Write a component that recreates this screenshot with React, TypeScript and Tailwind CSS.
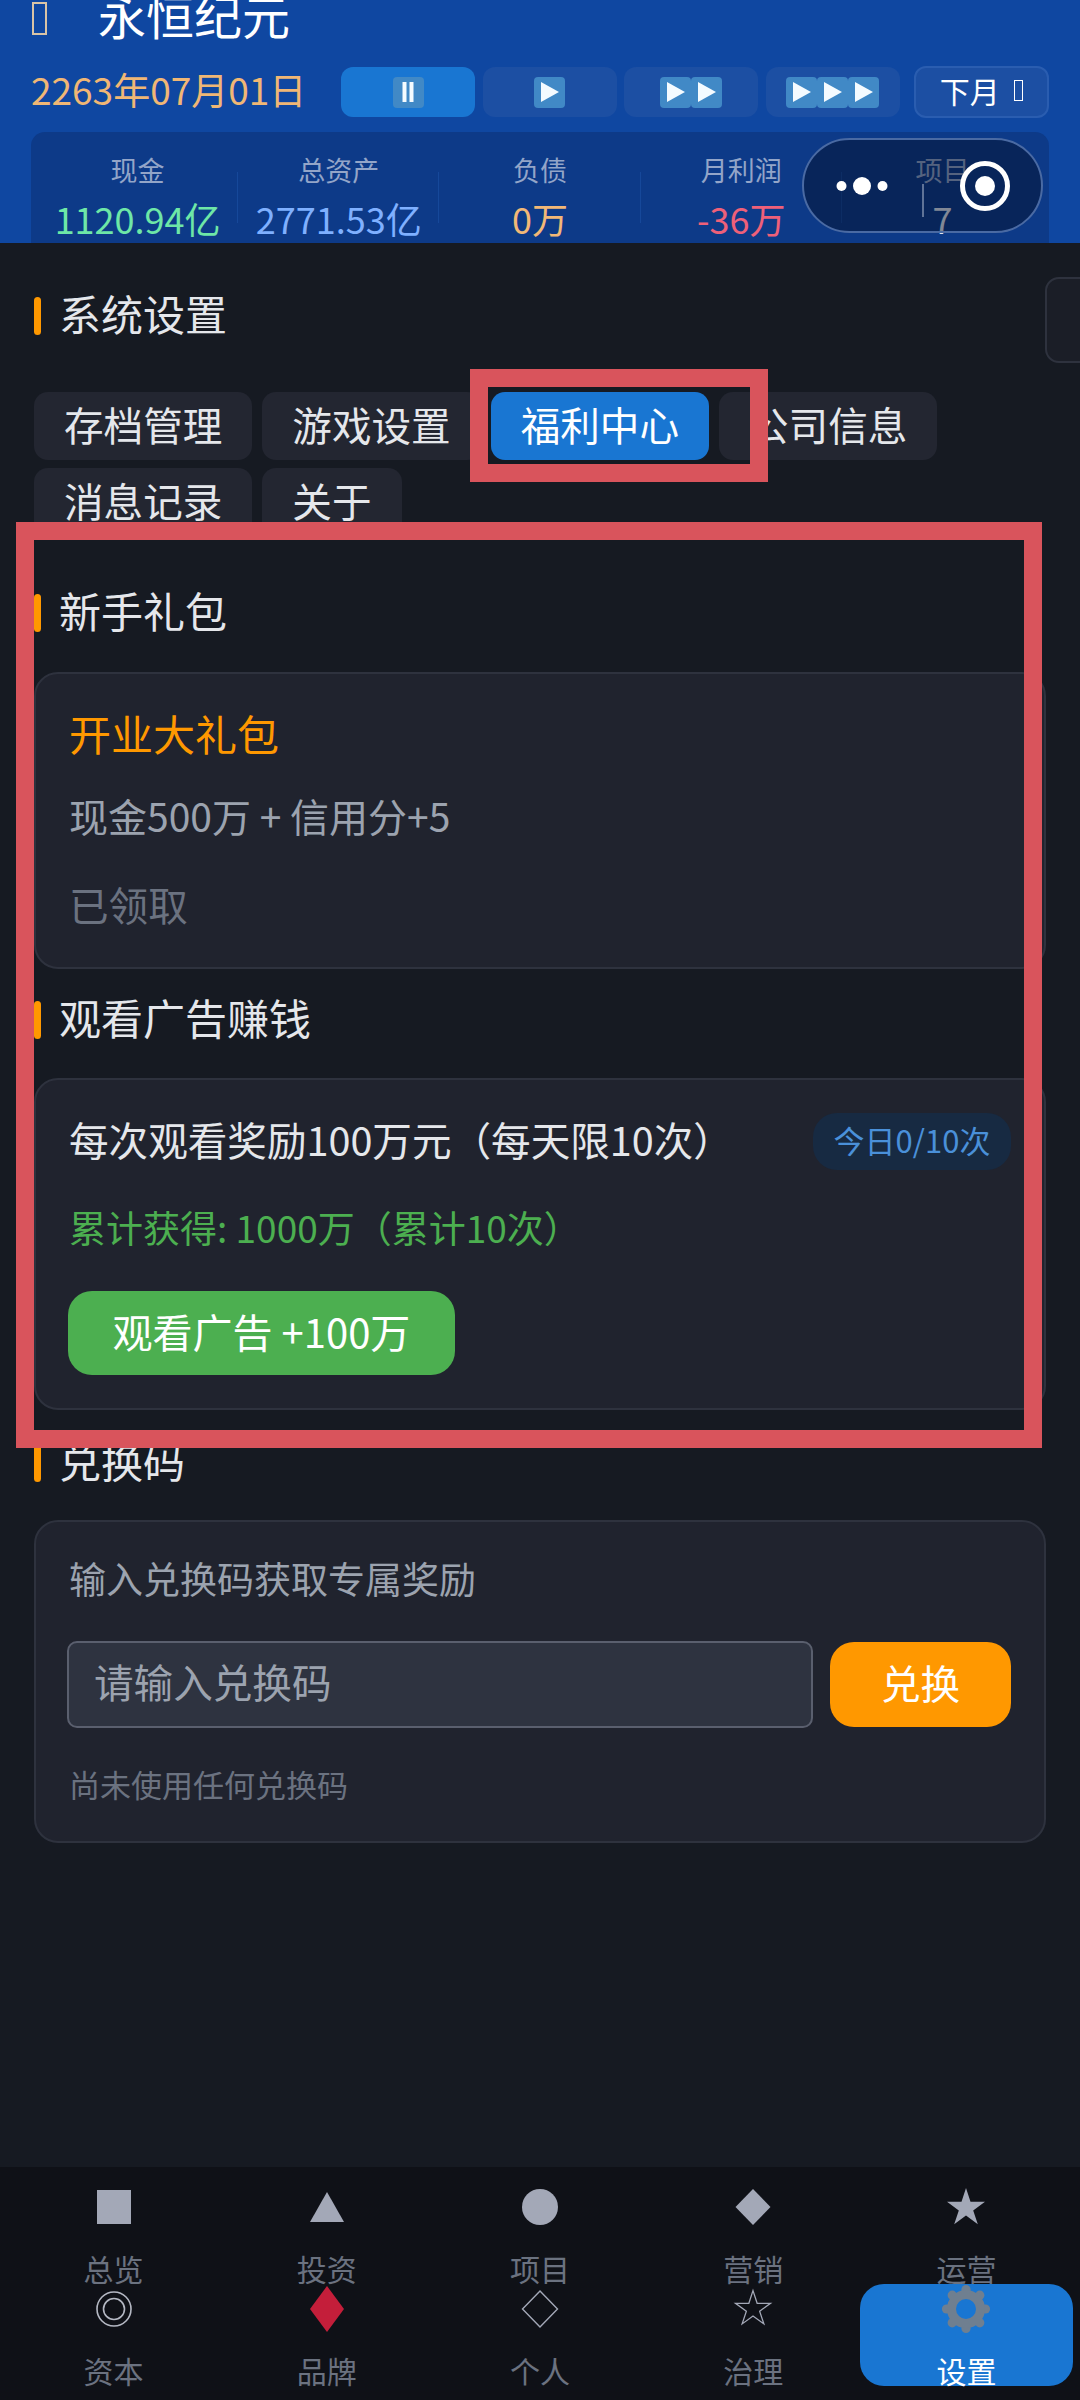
import React from "react";

const FONT = '"Noto Sans CJK SC", "Noto Sans", sans-serif';

function Square({ children }: { children: React.ReactNode }) {
  return (
    <span className="flex h-[31px] w-[31px] items-center justify-center rounded-[4px] bg-[#4189c6]">
      {children}
    </span>
  );
}

const Play = () => (
  <Square>
    <svg width="20" height="22" viewBox="0 0 20 22">
      <polygon points="1,1 19,11 1,21" fill="#f4fbff" />
    </svg>
  </Square>
);

function Speed({ active, children }: { active?: boolean; children: React.ReactNode }) {
  return (
    <div
      className={
        "flex h-[50px] w-[134px] items-center justify-center rounded-[12px] " +
        (active ? "bg-[#1976d2]" : "bg-[#1c4fa3]")
      }
    >
      {children}
    </div>
  );
}

function Stat({ label, value, color, divider }: { label: string; value: string; color: string; divider?: boolean }) {
  return (
    <div className="relative flex flex-col items-center">
      <div className="h-[38px] text-[27px] leading-[38px] text-[#93a5c8]">{label}</div>
      <div className={"mt-[5px] h-[48px] text-[36px] leading-[48px] " + color}>{value}</div>
      {divider && <div className="absolute right-0 top-[21px] h-[51px] w-[1px] bg-[#16489a]" />}
    </div>
  );
}

function Heading({ children, className }: { children: React.ReactNode; className?: string }) {
  return (
    <div className={"flex h-[38px] items-center " + (className ?? "")}>
      <div className="h-full w-[7px] rounded-full bg-[#ff9800]" />
      <div className="ml-[18px] pb-[6px] text-[42px] leading-[38px] text-[#e5e7eb]">{children}</div>
    </div>
  );
}

function Tab({ children, active }: { children: React.ReactNode; active?: boolean }) {
  return (
    <div
      className={
        "flex h-[68px] items-center rounded-[14px] px-[30px] pb-[5px] text-[39.6px] " +
        (active ? "bg-[#1976d2] text-white" : "bg-[#232631] text-[#e5e7eb]")
      }
    >
      {children}
    </div>
  );
}

function Card({ children, className }: { children: React.ReactNode; className?: string }) {
  return (
    <div className={"rounded-[24px] border-2 border-[#2e323e] bg-[#20232e] px-[33px] " + (className ?? "")}>
      {children}
    </div>
  );
}

const FILL = "#a3a8b7";
const STAR = "25,6 29.5,19.8 44,19.8 32.2,28.4 36.8,42.2 25,33.6 13.2,42.2 17.8,28.4 6,19.8 20.5,19.8";

function Glyph({ children }: { children: React.ReactNode }) {
  return (
    <svg width="50" height="50" viewBox="0 0 50 50" className="shrink-0">
      {children}
    </svg>
  );
}

const gearAngles = [0, 45, 90, 135, 180, 225, 270, 315];

const navItems: { label: string; icon: React.ReactNode; active?: boolean }[] = [
  { label: "总览", icon: <rect x="8" y="8" width="34" height="34" fill={FILL} /> },
  { label: "投资", icon: <polygon points="25,10 8,40 42,40" fill={FILL} /> },
  { label: "项目", icon: <circle cx="25" cy="25" r="18" fill={FILL} /> },
  { label: "营销", icon: <polygon points="25,7 42.5,25 25,43 7.5,25" fill={FILL} /> },
  { label: "运营", icon: <polygon points={STAR} fill={FILL} /> },
  {
    label: "资本",
    icon: (
      <g fill="none" stroke="#b4b8c3" strokeWidth="1.6">
        <circle cx="25" cy="25" r="17" />
        <circle cx="25" cy="25" r="10.5" />
      </g>
    ),
  },
  { label: "品牌", icon: <polygon points="25,2 42,25 25,48 8,25" fill="#c41e3a" /> },
  { label: "个人", icon: <polygon points="25,7 42.5,25 25,43 7.5,25" fill="none" stroke={FILL} strokeWidth="1.4" /> },
  {
    label: "治理",
    icon: (
      <polygon
        points={STAR}
        fill="none"
        stroke={FILL}
        strokeWidth="1.4"
        transform="translate(25 25) scale(0.92) translate(-25 -26)"
      />
    ),
  },
  {
    label: "设置",
    active: true,
    icon: (
      <g>
        {gearAngles.map((a) => (
          <circle key={a} cx="25" cy="5.5" r="4.6" fill="#6f7f90" transform={`rotate(${a} 25 25)`} />
        ))}
        <circle cx="25" cy="25" r="14.5" fill="none" stroke="#6f7f90" strokeWidth="9" />
      </g>
    ),
  },
];

export default function App() {
  return (
    <div
      className="relative flex h-[2400px] w-[1080px] flex-col overflow-hidden bg-[#161a22]"
      style={{ fontFamily: FONT }}
    >
      <header className="h-[243px] shrink-0 overflow-hidden bg-[#0f47a1] px-[31px]">
        <div className="-mt-[10px] flex h-[48px] items-center">
          <div className="ml-[1px] mt-[9px] h-[33px] w-[15px] border-2 border-[#d9c4a6]" />
          <div className="ml-[51px] text-[48px] leading-[48px] text-white">永恒纪元</div>
        </div>

        <div className="mt-[28px] flex h-[52px] items-center">
          <div className="w-[310px] shrink-0 whitespace-nowrap pb-[5px] text-[37px] text-[#f0b775]">2263年07月01日</div>
          <div className="flex gap-[7.5px]">
            <Speed active>
              <Square>
                <svg width="16" height="22" viewBox="0 0 16 22">
                  <rect x="2.5" y="1" width="4" height="20" fill="#f4fbff" />
                  <rect x="9.5" y="1" width="4" height="20" fill="#f4fbff" />
                </svg>
              </Square>
            </Speed>
            <Speed>
              <Play />
            </Speed>
            <Speed>
              <Play />
              <Play />
            </Speed>
            <Speed>
              <Play />
              <Play />
              <Play />
            </Speed>
          </div>
          <div className="ml-[14px] flex h-[52px] w-[136px] items-center justify-center rounded-[12px] border-2 border-[#2a5db0] bg-[#1c4fa3] pb-[4px] text-[30px] text-white">
            下月
            <span className="ml-[14px] h-[21px] w-[9px] border border-white" />
          </div>
        </div>

        <div className="mt-[14px] grid h-[130px] grid-cols-5 rounded-[14px] bg-[#0d3a88] px-[6px] pt-[19px]">
          <Stat label="现金" value="1120.94亿" color="text-[#6ee7a7]" divider />
          <Stat label="总资产" value="2771.53亿" color="text-[#7fb0ff]" divider />
          <Stat label="负债" value="0万" color="text-[#f2b877]" divider />
          <Stat label="月利润" value="-36万" color="text-[#ee6079]" divider />
          <Stat label="项目" value="7" color="text-[#dfe5f0]" />
        </div>
      </header>

      <main className="flex-1 overflow-hidden px-[34px] pt-[54px]">
        <Heading>系统设置</Heading>

        <div className="mt-[57px] flex flex-wrap gap-x-[10px] gap-y-[8px]">
          <Tab>存档管理</Tab>
          <Tab>游戏设置</Tab>
          <Tab active>福利中心</Tab>
          <Tab>公司信息</Tab>
          <Tab>消息记录</Tab>
          <Tab>关于</Tab>
        </div>

        <Heading className="mt-[58px]">新手礼包</Heading>
        <Card className="mt-[40px] pb-[37px] pt-[32px]">
          <div className="text-[42px] leading-[54px] text-[#ff9800]">开业大礼包</div>
          <div className="mt-[31px] text-[39px] leading-[48px] text-[#9ca3af]">现金500万 + 信用分+5</div>
          <div className="mt-[39px] text-[39.6px] leading-[52px] text-[#6b7280]">已领取</div>
        </Card>

        <Heading className="mt-[32px]">观看广告赚钱</Heading>
        <Card className="mt-[39px] pb-[33px] pt-[33px]">
          <div className="flex h-[57px] items-center justify-between">
            <div className="whitespace-nowrap pb-[5px] text-[39.6px] text-[#e5e7eb]">每次观看奖励100万元（每天限10次）</div>
            <div className="flex h-[57px] w-[198px] items-center justify-center rounded-[24px] bg-[#172a42] pb-[2px] text-[31px] text-[#4a90d9]">
              今日0/10次
            </div>
          </div>
          <div className="mt-[33px] text-[37px] leading-[48px] text-[#4caf50]">累计获得: 1000万（累计10次）</div>
          <button className="-ml-[1px] mt-[40px] flex h-[84px] w-[387px] items-center justify-center rounded-[24px] bg-[#4caf50] pb-[5px] text-[40px] text-white">
            观看广告 +100万
          </button>
        </Card>

        <Heading className="mt-[34px]">兑换码</Heading>
        <Card className="mt-[38px] pb-[36px] pt-[32px]">
          <div className="text-[37px] leading-[48px] text-[#9ca3af]">输入兑换码获取专属奖励</div>
          <div className="-ml-[2px] mt-[39px] flex h-[87px] items-center gap-[17px]">
            <input
              readOnly
              placeholder="请输入兑换码"
              className="h-[87px] w-[747px] rounded-[10px] border-2 border-[#5a5f6e] bg-[#2e3340] px-[25px] pb-[8px] text-[39.6px] outline-none placeholder:text-[#9ca3af]"
            />
            <button className="flex h-[85px] w-[181px] items-center justify-center rounded-[24px] bg-[#ff9800] pb-[5px] text-[39.6px] text-white">
              兑换
            </button>
          </div>
          <div className="mt-[35px] text-[31px] leading-[42px] text-[#6b7280]">尚未使用任何兑换码</div>
        </Card>
      </main>

      <nav className="h-[233px] shrink-0 bg-[#0f1117] px-[7px] pt-[15px]">
        <div className="grid grid-cols-5 grid-rows-[102px_102px]">
          {navItems.map((item) => (
            <div
              key={item.label}
              className={
                "flex h-[102px] flex-col items-center " + (item.active ? "rounded-[24px] bg-[#1976d2]" : "")
              }
            >
              <Glyph>{item.icon}</Glyph>
              <div
                className={
                  "mt-[18px] h-[36px] whitespace-nowrap text-[30px] leading-[36px] " +
                  (item.active ? "text-white" : "text-[#6b7280]")
                }
              >
                {item.label}
              </div>
            </div>
          ))}
        </div>
      </nav>

      {/* Floating mini-program capsule */}
      <div className="absolute left-[802px] top-[138px] flex h-[95px] w-[241px] items-center rounded-full border-2 border-[#4a6aa3] bg-[#00061a]/[0.42]">
        <svg width="237" height="91" viewBox="0 0 237 91" className="shrink-0">
          <line x1="119" y1="44" x2="119" y2="77" stroke="#5f7397" strokeWidth="2" />
          <circle cx="37.5" cy="46" r="5" fill="white" />
          <circle cx="58" cy="46" r="9" fill="white" />
          <circle cx="78.5" cy="46" r="5" fill="white" />
          <circle cx="181" cy="46" r="22.5" fill="none" stroke="white" strokeWidth="5" />
          <circle cx="181" cy="46" r="10" fill="white" />
        </svg>
      </div>

      {/* Card peeking in from the right edge */}
      <div className="absolute left-[1045px] top-[277px] h-[86px] w-[50px] rounded-[14px] border-2 border-[#2e323e] bg-[#1b1e27]" />

      {/* Annotation rectangles */}
      <div className="absolute left-[470px] top-[369px] h-[113px] w-[298px] border-[18px] border-[#d9545c]" />
      <div className="absolute left-[16px] top-[522px] h-[926px] w-[1026px] border-[18px] border-[#d9545c]" />
    </div>
  );
}
